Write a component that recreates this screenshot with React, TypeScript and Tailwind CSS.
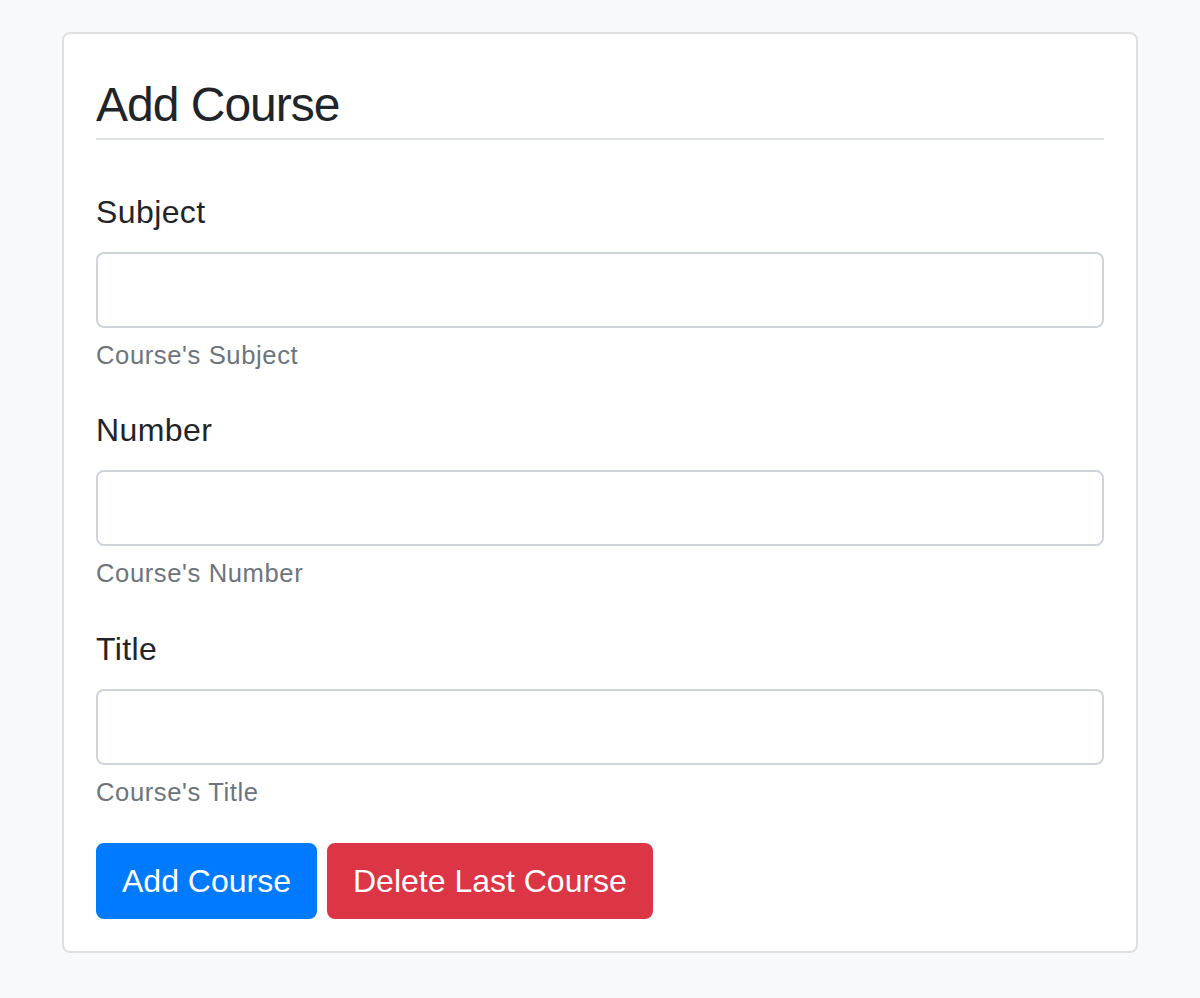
import React from "react";

const fields = [
  { id: "subject", label: "Subject", help: "Course's Subject" },
  { id: "number", label: "Number", help: "Course's Number" },
  { id: "title", label: "Title", help: "Course's Title" },
];

export default function App() {
  return (
    <div
      className="min-h-screen bg-[#f8f9fa] px-[62px] pt-[32px] pb-[45px] text-[#212529]"
      style={{ fontFamily: '"Liberation Sans", Arial, sans-serif' }}
    >
      <div className="rounded-[8px] border-2 border-[#dfdfdf] bg-white px-[32px] pt-[32px] pb-[32px]">
        {/* Header */}
        <h4 className="pt-[10px] text-[48px] leading-[58px] font-normal tracking-[-1px]">Add Course</h4>
        <hr className="mt-[4px] border-0 border-t-2 border-[#dee2e6]" />

        <form className="mt-[48px]" onSubmit={(e) => e.preventDefault()}>
          {fields.map((f) => (
            <div key={f.id} className="mb-[32px]">
              <label htmlFor={f.id} className="mb-[16px] block text-[32px] leading-[48px] tracking-[0.4px]">
                {f.label}
              </label>
              <input
                id={f.id}
                type="text"
                className="block h-[76px] w-full rounded-[8px] border-2 border-[#ced4da] bg-white px-[24px] text-[32px] outline-none"
              />
              <small className="mt-[8px] block text-[25.6px] leading-[38.4px] tracking-[0.6px] text-[#6c757d]">
                {f.help}
              </small>
            </div>
          ))}

          <div className="flex gap-[10px]">
            <button
              type="submit"
              className="h-[76px] rounded-[8px] border-2 border-[#007bff] bg-[#007bff] px-[24px] text-[32px] leading-[48px] text-white"
            >
              Add Course
            </button>
            <button
              type="button"
              className="h-[76px] rounded-[8px] border-2 border-[#dc3545] bg-[#dc3545] px-[24px] text-[32px] leading-[48px] text-white"
            >
              Delete Last Course
            </button>
          </div>
        </form>
      </div>
    </div>
  );
}
